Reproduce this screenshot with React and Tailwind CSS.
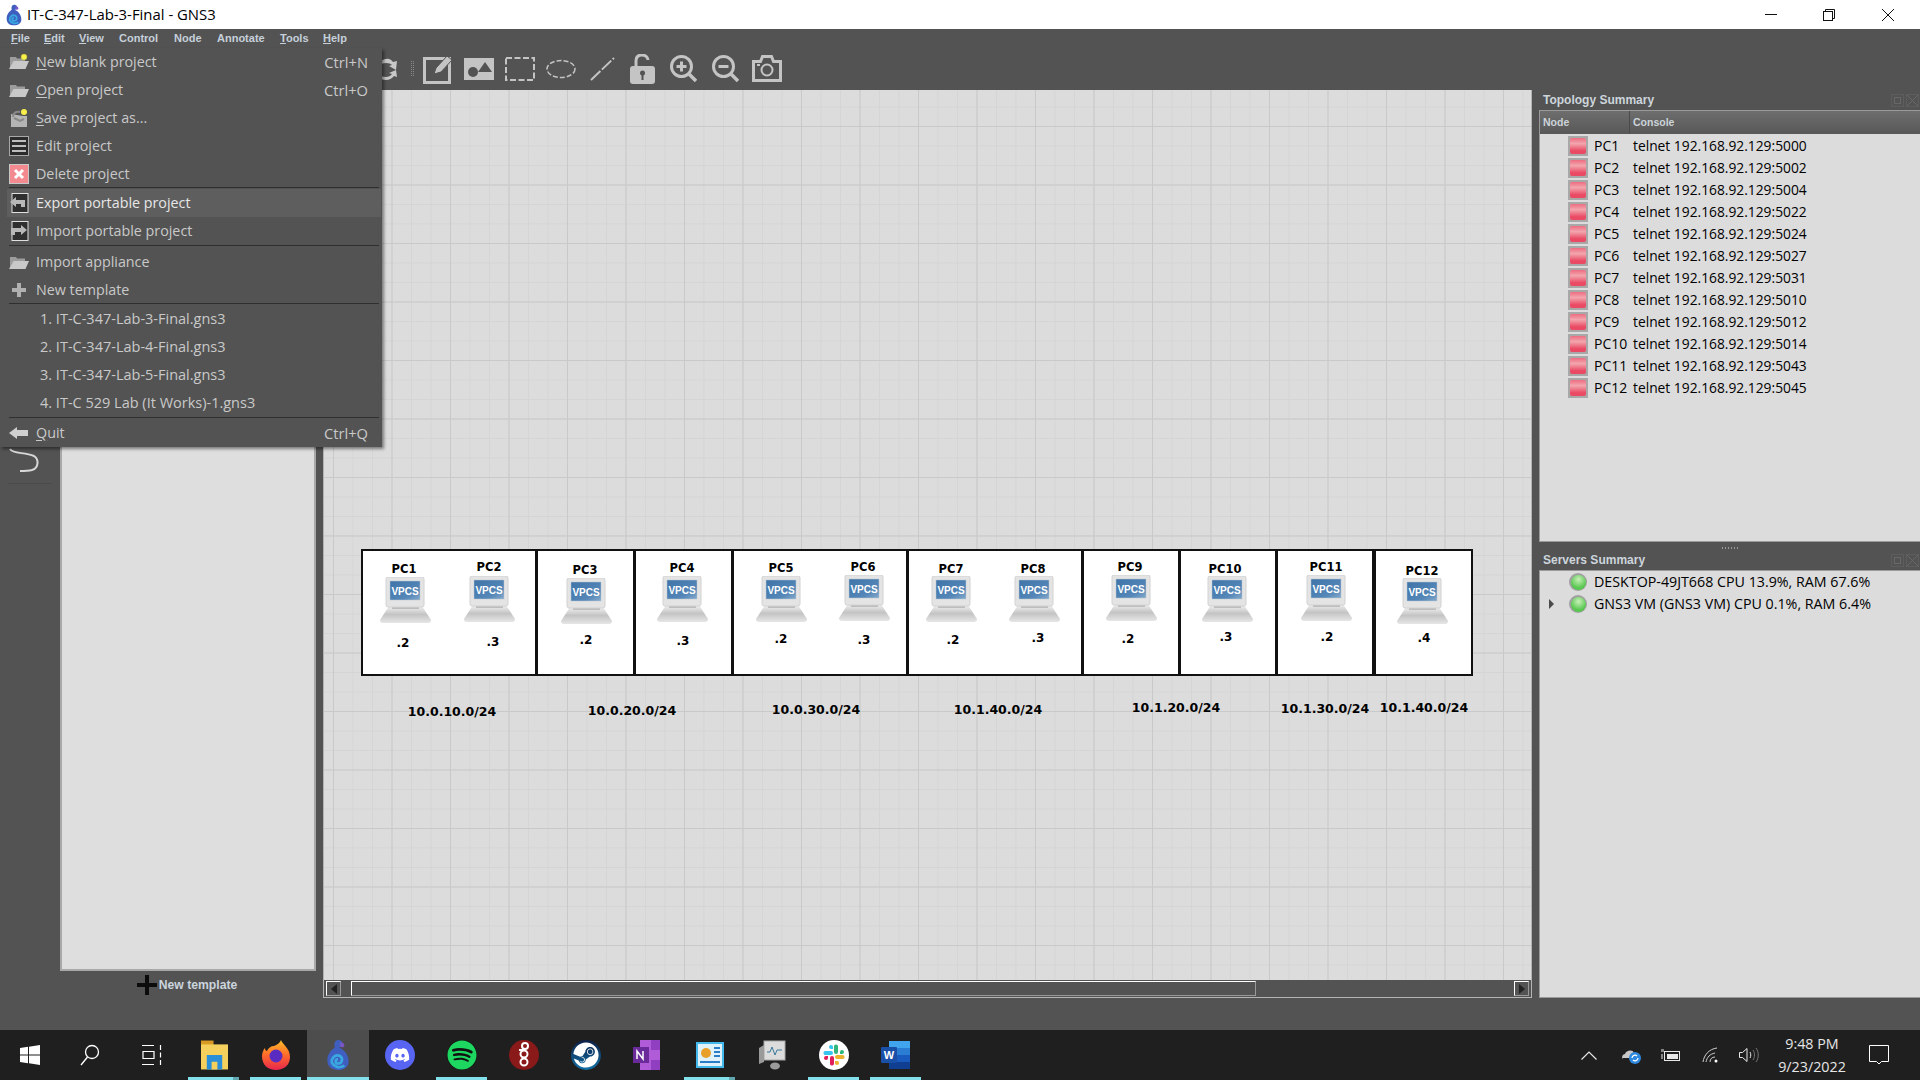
import React from 'react';
import { FaDiscord, FaSpotify, FaSteam } from 'react-icons/fa';

const ui = 'font-["Open_Sans","Noto_Sans",sans-serif]';
const bold = 'font-["Liberation_Sans",sans-serif] font-bold';

// canvas origin is at 323,90 of the window
const boxes = [
  { x: 38, w: 176 },
  { x: 213, w: 99 },
  { x: 311, w: 99 },
  { x: 409, w: 176 },
  { x: 584, w: 176 },
  { x: 759, w: 98 },
  { x: 856, w: 98 },
  { x: 953, w: 98 },
  { x: 1051, w: 99 },
];

const nodes = [
  { n: 'PC1', ix: 57, iy: 487, ly: 480, a: '.2', ax: 80, ay: 553, lx: 81 },
  { n: 'PC2', ix: 141, iy: 486, ly: 478, a: '.3', ax: 170, ay: 552, lx: 166 },
  { n: 'PC3', ix: 238, iy: 488, ly: 481, a: '.2', ax: 263, ay: 550, lx: 262 },
  { n: 'PC4', ix: 334, iy: 486, ly: 479, a: '.3', ax: 360, ay: 551, lx: 359 },
  { n: 'PC5', ix: 433, iy: 486, ly: 479, a: '.2', ax: 458, ay: 549, lx: 458 },
  { n: 'PC6', ix: 516, iy: 485, ly: 478, a: '.3', ax: 541, ay: 550, lx: 540 },
  { n: 'PC7', ix: 603, iy: 486, ly: 480, a: '.2', ax: 630, ay: 550, lx: 628 },
  { n: 'PC8', ix: 686, iy: 486, ly: 480, a: '.3', ax: 715, ay: 548, lx: 710 },
  { n: 'PC9', ix: 783, iy: 485, ly: 478, a: '.2', ax: 805, ay: 549, lx: 807 },
  { n: 'PC10', ix: 879, iy: 486, ly: 480, a: '.3', ax: 903, ay: 547, lx: 902 },
  { n: 'PC11', ix: 978, iy: 485, ly: 478, a: '.2', ax: 1004, ay: 547, lx: 1003 },
  { n: 'PC12', ix: 1074, iy: 488, ly: 482, a: '.4', ax: 1101, ay: 548, lx: 1099 },
];

const subnets = [
  { t: '10.0.10.0/24', x: 129, y: 622 },
  { t: '10.0.20.0/24', x: 309, y: 621 },
  { t: '10.0.30.0/24', x: 493, y: 620 },
  { t: '10.1.40.0/24', x: 675, y: 620 },
  { t: '10.1.20.0/24', x: 853, y: 618 },
  { t: '10.1.30.0/24', x: 1002, y: 619 },
  { t: '10.1.40.0/24', x: 1101, y: 618 },
];

const pcs = [
  ['PC1', 5000], ['PC2', 5002], ['PC3', 5004], ['PC4', 5022], ['PC5', 5024], ['PC6', 5027],
  ['PC7', 5031], ['PC8', 5010], ['PC9', 5012], ['PC10', 5014], ['PC11', 5043], ['PC12', 5045],
];

function VpcsIcon({ id }) {
  return (
    <svg width="51" height="46" viewBox="0 0 51 46">
      <defs>
        <linearGradient id={`kb${id}`} x1="0" y1="0" x2="0" y2="1">
          <stop offset="0" stopColor="#f2f2f2" />
          <stop offset="0.5" stopColor="#c4c4c4" />
          <stop offset="1" stopColor="#e6e6e6" />
        </linearGradient>
        <linearGradient id={`sc${id}`} x1="0" y1="0" x2="1" y2="1">
          <stop offset="0" stopColor="#3f74a8" />
          <stop offset="0.7" stopColor="#5587b8" />
          <stop offset="1" stopColor="#86aacb" />
        </linearGradient>
      </defs>
      <path d="M9 29h33l9 14q0 3-3 3H3q-3 0-3-3z" fill={`url(#kb${id})`} />
      <rect x="12" y="28" width="27" height="4" fill="#bdbdbd" />
      <rect x="6" y="0" width="38" height="30" rx="2" fill="#e4e4e4" stroke="#d2d2d2" />
      <rect x="10" y="4" width="30" height="19" fill={`url(#sc${id})`} stroke="#bcc8d2" strokeWidth="0.5" />
      <text x="25" y="18" textAnchor="middle" fill="#fff" fontFamily="Liberation Sans, sans-serif" fontWeight="700" fontSize="10">VPCS</text>
    </svg>
  );
}

function FolderIcon({ star }) {
  return (
    <svg width="20" height="18" viewBox="0 0 20 18">
      <path d="M1 4h6l1 1.5h8V8H5L1 15z" fill="#9c9c9c" />
      <path d="M4.500 8H20l-3.500 8H0z" fill="#c9c9c9" />
      {star && <circle cx="15" cy="4" r="3" fill="#f7f04a" stroke="#a8a43a" strokeWidth="0.5" />}
    </svg>
  );
}

function MenuIcon({ kind }) {
  if (kind === 'folder') return <FolderIcon />;
  if (kind === 'folderstar') return <FolderIcon star />;
  if (kind === 'save') {
    return (
      <svg width="20" height="20" viewBox="0 0 20 20">
        <path d="M2 6l12 2 4 0v11H2z" fill="#b4b4b4" />
        <path d="M4 9c0-4 3-6 7-5M5 10l6 3 4-2" stroke="#8a8a8a" strokeWidth="2" fill="none" />
        <circle cx="15" cy="4" r="3" fill="#f7f04a" />
      </svg>
    );
  }
  if (kind === 'edit') {
    return (
      <svg width="20" height="20" viewBox="0 0 20 20">
        <rect x="0.500" y="0.500" width="19" height="19" fill="#2b2b2b" stroke="#a8a8a8" />
        <rect x="3" y="4" width="14" height="2" fill="#bdbdbd" />
        <rect x="3" y="9" width="14" height="2" fill="#bdbdbd" />
        <rect x="3" y="14" width="14" height="2" fill="#bdbdbd" />
      </svg>
    );
  }
  if (kind === 'delete') {
    return (
      <svg width="20" height="20" viewBox="0 0 20 20">
        <rect x="0.500" y="0.500" width="19" height="19" fill="#f28a8f" stroke="#c8c8c8" />
        <path d="M6 6l8 8M14 6l-8 8" stroke="#fff" strokeWidth="3" />
      </svg>
    );
  }
  if (kind === 'export' || kind === 'import') {
    return (
      <svg width="20" height="20" viewBox="0 0 20 20">
        <rect x="3" y="0.500" width="16" height="19" fill="#2f2f2f" stroke="#e0e0e0" />
        {kind === 'export'
          ? <path d="M1 9l6-5v3h9v7h-4v-3H7v3z" fill="#b8b8b8" />
          : <path d="M18 9l-6-5v3H2v7h4v-3h6v3z" fill="#b8b8b8" />}
      </svg>
    );
  }
  if (kind === 'plus') {
    return (
      <svg width="20" height="20" viewBox="0 0 20 20">
        <path d="M8 3h4v5h5v4h-5v5H8v-5H3V8h5z" fill="#b0b0b0" />
      </svg>
    );
  }
  if (kind === 'quit') {
    return (
      <svg width="20" height="14" viewBox="0 0 20 14">
        <path d="M0 7l8-6v3h11v6H8v3z" fill="#cfcfcf" />
      </svg>
    );
  }
  return null;
}

function MenuItem({ icon, ul, label, shortcut, active, nudge }) {
  return (
    <div className={`h-[28px] flex items-center pr-[14px] ${active ? 'bg-[#5e5e5e] ml-[7px] pl-[2px] mr-[1px]' : 'pl-[9px]'}`}>
      <div className="w-[20px] flex justify-center shrink-0"><MenuIcon kind={icon} /></div>
      <div className={`ml-[7px] flex-1 text-[14.300px] leading-none ${nudge ? 'pt-px' : ''} ${active ? 'text-[#e6e6e6]' : 'text-[#c9c9c9]'}`}>
        {ul ? <><u className="underline-offset-2">{ul}</u>{label}</> : label}
      </div>
      {shortcut && <div className="text-[14.700px] leading-none text-[#c9c9c9]">{shortcut}</div>}
    </div>
  );
}

const Sep = ({ className }) => <div className={`h-px bg-[#2f2f2f] mx-[9px] mr-[3px] ${className}`} />;

function FileMenu() {
  return (
    <div className={`absolute left-0 top-[19px] w-[382px] h-[399px] bg-[#535353] z-20 shadow-[2px_2px_3px_rgba(0,0,0,0.45)] ${ui}`}>
      <MenuItem icon="folderstar" ul="N" label="ew blank project" shortcut="Ctrl+N" />
      <MenuItem icon="folder" ul="O" label="pen project" shortcut="Ctrl+O" />
      <MenuItem icon="save" ul="S" label="ave project as..." />
      <MenuItem icon="edit" label="Edit project" />
      <MenuItem icon="delete" label="Delete project" />
      <Sep className="-mt-px mb-px" />
      <MenuItem icon="export" label="Export portable project" active nudge />
      <MenuItem icon="import" label="Import portable project" nudge />
      <Sep className="mb-[2px]" />
      <MenuItem icon="folder" label="Import appliance" />
      <MenuItem icon="plus" label="New template" />
      <Sep className="-mt-px mb-[1px]" />
      {['1. IT-C-347-Lab-3-Final.gns3', '2. IT-C-347-Lab-4-Final.gns3', '3. IT-C-347-Lab-5-Final.gns3', '4. IT-C 529 Lab (It Works)-1.gns3'].map(t => (
        <div key={t} className="h-[28px] flex items-center pl-[40px] text-[14.500px] leading-none text-[#c9c9c9]">{t}</div>
      ))}
      <Sep className="mb-[1px]" />
      <MenuItem icon="quit" ul="Q" label="uit" shortcut="Ctrl+Q" />
    </div>
  );
}

const Grip = ({ className }) => (
  <div className={`grid grid-cols-2 gap-[1px] ${className}`}>
    {Array.from({ length: 16 }).map((_, i) => <div key={i} className="w-[1px] h-[1px] bg-[#8a8a8a]" />)}
  </div>
);

function DockButtons() {
  return (
    <div className="flex gap-[2px] opacity-60">
      <svg width="13" height="13" viewBox="0 0 13 13"><rect x="0.500" y="0.500" width="12" height="12" fill="none" stroke="#777" strokeDasharray="1 1" /><rect x="3.500" y="3.500" width="6" height="6" fill="none" stroke="#777" /></svg>
      <svg width="13" height="13" viewBox="0 0 13 13"><rect x="0.500" y="0.500" width="12" height="12" fill="none" stroke="#777" strokeDasharray="1 1" /><path d="M1 1l11 11M12 1L1 12" stroke="#777" /></svg>
    </div>
  );
}

function Toolbar() {
  const c = '#c4c4c4';
  return (
    <div className="h-[42px] flex items-center pl-[381px] pb-[1px] shrink-0">
      <svg width="18" height="30" viewBox="0 0 18 30" className="mr-[12px]">
        <path d="M0 7c6-4 10-2 12 1l4-1-1 9-7-4 3-1C9 9 5 8 0 10zM0 22c5 2 9 1 11-2l-3-1 7-3 1 7-3-1c-3 4-8 5-13 3z" fill="#c8c8c8" />
      </svg>
      <Grip className="mr-[9px]" />
      <svg width="30" height="30" viewBox="0 0 30 30" className="mr-[11px]">
        <rect x="1.500" y="4.500" width="25" height="24" fill="none" stroke={c} strokeWidth="3" />
        <path d="M11 20l2-6L24 2l5 4-11 12z" fill={c} stroke="#535353" strokeWidth="1" />
      </svg>
      <svg width="30" height="22" viewBox="0 0 30 22" className="mr-[11px]">
        <rect width="30" height="22" fill={c} />
        <circle cx="9" cy="14" r="5" fill="#535353" />
        <path d="M21 4l7 10H14z" fill="#535353" />
      </svg>
      <svg width="30" height="24" viewBox="0 0 30 24" className="mr-[11px]">
        <rect x="1" y="1" width="28" height="22" fill="none" stroke={c} strokeWidth="2" strokeDasharray="6 2.500" />
      </svg>
      <svg width="30" height="20" viewBox="0 0 30 20" className="mr-[14px]">
        <ellipse cx="15" cy="10" rx="14" ry="8.500" fill="none" stroke={c} strokeWidth="1.500" strokeDasharray="5 2" />
      </svg>
      <svg width="25" height="24" viewBox="0 0 25 24" className="mr-[15px]">
        <path d="M1 23L24 1" stroke={c} strokeWidth="2" strokeDasharray="13 2" />
      </svg>
      <svg width="25" height="30" viewBox="0 0 25 30" className="mr-[15px]">
        <path d="M6 13V7c0-5 3-6 6-6s6 2 6 5" fill="none" stroke={c} strokeWidth="3" />
        <rect x="0" y="12" width="25" height="18" rx="3" fill={c} />
        <circle cx="12.500" cy="19" r="2.500" fill="#535353" />
        <rect x="11.500" y="20" width="2" height="6" fill="#535353" />
      </svg>
      <svg width="27" height="28" viewBox="0 0 27 28" className="mr-[15px]">
        <circle cx="11.500" cy="11.500" r="10" fill="none" stroke={c} strokeWidth="3" />
        <path d="M18 18l8 8" stroke={c} strokeWidth="3.500" />
        <path d="M6.500 11.500h10M11.500 6.500v10" stroke={c} strokeWidth="3" />
      </svg>
      <svg width="27" height="28" viewBox="0 0 27 28" className="mr-[13px]">
        <circle cx="11.500" cy="11.500" r="10" fill="none" stroke={c} strokeWidth="3" />
        <path d="M18 18l8 8" stroke={c} strokeWidth="3.500" />
        <path d="M6.500 11.500h10" stroke={c} strokeWidth="3" />
      </svg>
      <svg width="30" height="27" viewBox="0 0 30 27">
        <path d="M1.500 6.500h7l2-5h9l2 5h7v19h-27z" fill="none" stroke={c} strokeWidth="3" />
        <circle cx="15" cy="15" r="5.500" fill="none" stroke={c} strokeWidth="2" />
        <rect x="5" y="9" width="3" height="2" fill={c} />
      </svg>
    </div>
  );
}

function Canvas() {
  return (
    <div className="relative flex-1 bg-[#dcdcdc] bg-[linear-gradient(to_right,#c9c9c9_1px,transparent_1px),linear-gradient(to_bottom,#c9c9c9_1px,transparent_1px),linear-gradient(to_right,#d5d5d5_1px,transparent_1px),linear-gradient(to_bottom,#d5d5d5_1px,transparent_1px)] bg-[size:58.5px_58.5px,58.5px_58.5px,19.5px_19.5px,19.5px_19.5px] bg-[position:9px_36px,9px_36px,9px_36px,9px_36px] overflow-hidden">
      {/* scene items keep their own coordinates */}
      <div className="absolute -left-px top-0">
        {boxes.map(b => (
          <div key={b.x} className="absolute top-[459px] h-[127px] bg-white border-2 border-[#111]" style={{ left: b.x, width: b.w }} />
        ))}
        {nodes.map(p => (
          <React.Fragment key={p.n}>
            <div className={`absolute -translate-x-1/2 -translate-y-1/2 text-[11.500px] leading-none text-black font-["DejaVu_Sans",sans-serif] font-bold`} style={{ left: p.lx, top: p.ly }}>{p.n}</div>
            <div className="absolute" style={{ left: p.ix, top: p.iy }}><VpcsIcon id={p.n} /></div>
            <div className={`absolute -translate-x-1/2 -translate-y-1/2 text-[12px] leading-none text-black font-["DejaVu_Sans",sans-serif] font-bold`} style={{ left: p.ax, top: p.ay }}>{p.a}</div>
          </React.Fragment>
        ))}
        {subnets.map((s, i) => (
          <div key={i} className={`absolute -translate-x-1/2 -translate-y-1/2 text-[12.500px] leading-none whitespace-nowrap text-black font-["DejaVu_Sans",sans-serif] font-bold`} style={{ left: s.x, top: s.y }}>{s.t}</div>
        ))}
      </div>
    </div>
  );
}

function Scrollbar() {
  return (
    <div className="h-[18px] flex items-start pt-[1px] pl-[2px] pr-[2px] bg-[#535353] border-b border-[#b4b4b4] shrink-0">
      <div className="w-[15px] h-[15px] flex items-center justify-center border-t border-l border-white border-r border-b border-r-[#999] border-b-[#999]">
        <div className="w-0 h-0 border-y-[5px] border-y-transparent border-r-[6px] border-r-[#222]" />
      </div>
      <div className="ml-[10px] w-[905px] h-[15px] border-t border-l border-white border-r border-b border-r-[#999] border-b-[#999]" />
      <div className="flex-1" />
      <div className="w-[15px] h-[15px] flex items-center justify-center border-t border-l border-white border-r border-b border-r-[#999] border-b-[#999]">
        <div className="w-0 h-0 border-y-[5px] border-y-transparent border-l-[6px] border-l-[#222]" />
      </div>
    </div>
  );
}

function TopologyDock() {
  return (
    <div className="h-[452px] flex flex-col shrink-0">
      <div className={`h-[20px] flex items-center justify-between pl-[4px] pr-[1px] text-[12px] text-[#cdd5dc] ${bold}`}>
        <span>Topology Summary</span>
        <DockButtons />
      </div>
      <div className="flex-1 bg-[#dcdcdc] border border-[#9a9a9a] border-r-0">
        <div className={`h-[23px] flex items-center bg-[linear-gradient(#6e6e6e,#585858)] text-[10.500px] text-[#ccd4da] ${bold}`}>
          <div className="w-[90px] pl-[3px] border-r border-[#4a4a4a] h-full flex items-center">Node</div>
          <div className="pl-[3px]">Console</div>
        </div>
        <div className={`${ui} pt-px text-[14px] leading-none text-black`}>
          {pcs.map(([name, port]) => (
            <div key={name} className="h-[22px] flex items-center">
              <div className="ml-[28px] w-[20px] h-[20px] bg-[#a8a8a8] flex items-center justify-center shrink-0">
                <div className="w-[16px] h-[16px] rounded-[2px] bg-[linear-gradient(#ee6c80,#f2a6ae_35%,#ea4a64_80%)]" />
              </div>
              <div className="w-[39px] ml-[6px] shrink-0">{name}</div>
              <div className="text-[13.800px]">telnet 192.168.92.129:{port}</div>
            </div>
          ))}
        </div>
      </div>
    </div>
  );
}

function ServersDock() {
  const Led = () => (
    <div className="w-[18px] h-[18px] rounded-full bg-[#a0a0a0] flex items-center justify-center shrink-0">
      <div className="w-[15px] h-[15px] rounded-full bg-[radial-gradient(circle_at_50%_30%,#c8f0b8,#58c850_65%)]" />
    </div>
  );
  return (
    <div className="flex-1 flex flex-col">
      <div className="h-[7px] flex justify-center items-end">
        <div className="w-[16px] h-[2px] bg-[repeating-linear-gradient(to_right,#999_0_1px,transparent_1px_3px)]" />
      </div>
      <div className={`h-[21px] flex items-center justify-between pl-[4px] pr-[1px] pt-px text-[12px] text-[#cdd5dc] ${bold}`}>
        <span>Servers Summary</span>
        <DockButtons />
      </div>
      <div className={`flex-1 bg-[#dcdcdc] border-t border-b border-l border-[#9a9a9a] ${ui} text-[14.250px] leading-none text-black`}>
        <div className="h-[22px] flex items-center pl-[29px]"><Led /><span className="ml-[7px]">DESKTOP-49JT668 CPU 13.9%, RAM 67.6%</span></div>
        <div className="h-[22px] flex items-center pl-[9px]">
          <div className="w-0 h-0 border-y-[5px] border-y-transparent border-l-[5px] border-l-[#4a4a4a] mr-[15px]" />
          <Led /><span className="ml-[7px]">GNS3 VM (GNS3 VM) CPU 0.1%, RAM 6.4%</span>
        </div>
      </div>
    </div>
  );
}

function GnsIcon({ size }) {
  return (
    <svg width={size} height={size} viewBox="0 0 30 30">
      <path d="M15 1c4 0 5 3 4 6l-3 1c5 2 9 7 9 13 0 5-4 8-10 8S5 26 5 20c0-6 4-10 7-12-1-3 0-7 3-7z" fill="#3f5fc0" />
      <path d="M17 3c2 0 4 1 4 3s-3 2-4 1z" fill="#7a55c8" />
      <path d="M9 22c0-5 4-8 8-6 3 2 2 7-2 7-3 0-3-4 0-4M9 22c2 4 7 6 12 3" fill="none" stroke="#39a8e0" strokeWidth="2.500" />
    </svg>
  );
}

const apps = [
  {
    line: true, extra: true, icon: (
      <svg width="27" height="30" viewBox="0 0 28 30">
        <rect x="0" y="0" width="13" height="5" fill="#d89a22" />
        <rect x="0" y="4" width="28" height="26" fill="#f5d05c" />
        <rect x="6" y="15" width="16" height="15" fill="#2a8fd8" />
        <rect x="11" y="22" width="6" height="8" fill="#f5d05c" />
      </svg>
    ),
  },
  {
    line: true, icon: (
      <svg width="30" height="30" viewBox="0 0 30 30">
        <defs>
          <linearGradient id="ff" x1="0" y1="0" x2="0" y2="1"><stop offset="0" stopColor="#ffc02a" /><stop offset="0.5" stopColor="#ff6a2a" /><stop offset="1" stopColor="#e8264e" /></linearGradient>
        </defs>
        <path d="M20 0c1 4 9 8 9 17 0 8-6 13-14 13S1 25 1 16c0-4 2-7 3-8 0 2 1 3 2 3 1-3 4-5 7-5 3-1 6-3 7-6z" fill="url(#ff)" />
        <circle cx="15" cy="16" r="6.500" fill="#5a2bc0" />
      </svg>
    ),
  },
  { line: true, active: true, icon: <GnsIcon size={32} /> },
  {
    icon: <div className="w-[30px] h-[30px] rounded-full bg-[#5865f2] flex items-center justify-center"><FaDiscord className="text-white" size={20} /></div>,
  },
  {
    line: true, icon: <div className="w-[30px] h-[30px] rounded-full bg-[#111] flex items-center justify-center"><FaSpotify className="text-[#1ed760]" size={30} /></div>,
  },
  {
    icon: (
      <svg width="30" height="30" viewBox="0 0 30 30">
        <circle cx="15" cy="15" r="15" fill="#8a1a1a" />
        <circle cx="16" cy="6" r="3" fill="none" stroke="#fff" strokeWidth="2" />
        <circle cx="15" cy="14" r="3.500" fill="none" stroke="#fff" strokeWidth="2" />
        <circle cx="15" cy="22" r="3.500" fill="none" stroke="#fff" strokeWidth="2" />
        <path d="M10 10h5" stroke="#fff" strokeWidth="2" />
      </svg>
    ),
  },
  {
    icon: <div className="w-[30px] h-[30px] rounded-full bg-[linear-gradient(#0f1f46,#1070a8)] flex items-center justify-center"><FaSteam className="text-white" size={26} /></div>,
  },
  {
    icon: (
      <svg width="30" height="30" viewBox="0 0 30 30">
        <path d="M7 0h20v30H7z" fill="#b05cd8" />
        <path d="M18 0h9v10h-9zM18 20h9v10h-9z" fill="#8f3fbf" />
        <rect x="0" y="7" width="16" height="16" fill="#6a2a9a" />
        <path d="M4 19v-8l6 8v-8" stroke="#fff" strokeWidth="1.500" fill="none" />
      </svg>
    ),
  },
  {
    line: true, extra: true, icon: (
      <svg width="28" height="26" viewBox="0 0 28 26">
        <rect width="28" height="26" fill="#42b8ec" />
        <rect x="2" y="2" width="24" height="22" fill="#dff2fb" />
        <circle cx="10" cy="11" r="5" fill="#e8a02a" />
        <path d="M18 6h6M18 10h6M18 14h6M4 20h20" stroke="#2a7ec8" strokeWidth="2" />
      </svg>
    ),
  },
  {
    icon: (
      <svg width="28" height="30" viewBox="0 0 28 30">
        <rect x="6" y="1" width="21" height="19" fill="#dcdcdc" stroke="#a8a8a8" />
        <path d="M9 12h3l2-5 3 8 2-5h5" stroke="#3a7a9a" fill="none" />
        <path d="M1 8l5-3v17l-5 2z" fill="#9a9a9a" />
        <ellipse cx="17" cy="26" rx="5" ry="3.500" fill="#9a9a9a" />
      </svg>
    ),
  },
  {
    line: true, icon: (
      <div className="w-[30px] h-[30px] rounded-full bg-white flex items-center justify-center">
        <svg width="22" height="22" viewBox="0 0 22 22">
          <path d="M8 1a2 2 0 0 1 2 2v2H8a2 2 0 0 1 0-4zM2 7h6a2 2 0 0 1 0 4H3a2 2 0 0 1-1-4z" fill="#36c5f0" />
          <path d="M21 8a2 2 0 0 1-2 2h-2V8a2 2 0 0 1 4 0zM15 2v6a2 2 0 0 1-4 0V3a2 2 0 0 1 4-1z" fill="#2eb67d" />
          <path d="M14 21a2 2 0 0 1-2-2v-2h2a2 2 0 0 1 0 4zM20 15h-6a2 2 0 0 1 0-4h5a2 2 0 0 1 1 4z" fill="#ecb22e" />
          <path d="M1 14a2 2 0 0 1 2-2h2v2a2 2 0 0 1-4 0zM7 20v-6a2 2 0 0 1 4 0v5a2 2 0 0 1-4 1z" fill="#e01e5a" />
        </svg>
      </div>
    ),
  },
  {
    line: true, icon: (
      <svg width="30" height="30" viewBox="0 0 30 30">
        <rect x="8" y="1" width="21" height="28" rx="1" fill="#2b7cd3" />
        <rect x="8" y="1" width="21" height="7" fill="#41a5ee" />
        <rect x="8" y="15" width="21" height="7" fill="#185abd" />
        <rect x="8" y="22" width="21" height="7" fill="#103f91" />
        <rect x="0" y="7" width="16" height="16" rx="1" fill="#1a4fa8" />
        <text x="8" y="19" textAnchor="middle" fill="#fff" fontFamily="Liberation Sans, sans-serif" fontWeight="700" fontSize="11">W</text>
      </svg>
    ),
  },
];

function Taskbar() {
  return (
    <div className="h-[50px] bg-[#1f1f1f] flex items-center shrink-0 relative">
      <div className="w-[60px] h-full flex items-center justify-center">
        <svg width="20" height="20" viewBox="0 0 20 20" fill="#fff">
          <path d="M0 3l8-1.200v7.700H0zM9 1.700L20 0v9.500H9zM0 10.500h8v7.700L0 17zM9 10.500h11V20L9 18.300z" />
        </svg>
      </div>
      <div className="w-[60px] h-full flex items-center justify-center">
        <svg width="20" height="22" viewBox="0 0 20 22" fill="none" stroke="#fff" strokeWidth="1.300">
          <circle cx="12" cy="8" r="6.500" /><path d="M7.500 13L1 21" />
        </svg>
      </div>
      <div className="w-[63px] h-full flex items-center justify-center">
        <svg width="20" height="20" viewBox="0 0 20 20" fill="none" stroke="#fff" strokeWidth="1.200">
          <path d="M0 .5h12M0 19.500h12M1 6.500h11v7H1zM18.500 0v5M18.500 7.500v5M18.500 15v5" />
        </svg>
      </div>
      {apps.map((a, i) => (
        <div key={i} className={`w-[62px] h-full relative flex items-center justify-center ${a.active ? 'bg-[#4d4d4d]' : ''}`}>
          {a.icon}
          {a.line && <div className={`absolute bottom-0 h-[3px] bg-[#82e0ea] ${a.active ? 'left-0 right-0' : 'left-[5px] right-[6px]'}`} />}
          {a.extra && <div className="absolute bottom-0 right-[6px] w-[6px] h-[3px] bg-[#5fa8b0]" />}
        </div>
      ))}
      <div className="flex-1" />
      <div className="flex items-center h-full">
        <svg width="16" height="9" viewBox="0 0 16 9" fill="none" stroke="#e8e8e8" strokeWidth="1.200" className="mr-[24px]"><path d="M.5 8.500L8 1l7.500 7.500" /></svg>
        <svg width="20" height="17" viewBox="0 0 20 17" className="mr-[20px]">
          <path d="M2 12c-2-2 0-5 2-5 1-4 8-5 9-1 2 0 4 2 3 5H2z" fill="#c8c8c8" />
          <circle cx="14" cy="11" r="6" fill="#2d88e0" />
          <path d="M11 11a3 3 0 0 1 5-2M17 11a3 3 0 0 1-5 2" stroke="#fff" strokeWidth="1.300" fill="none" />
        </svg>
        <svg width="20" height="13" viewBox="0 0 20 13" fill="none" stroke="#e8e8e8" className="mr-[21px]">
          <rect x="3.500" y="2.500" width="15" height="9" /><rect x="6" y="5" width="11" height="5" fill="#e8e8e8" stroke="none" /><path d="M2 0v3M0 0v3M1 5v5" />
        </svg>
        <svg width="16" height="16" viewBox="0 0 16 16" fill="none" stroke="#d0d0d0" className="mr-[21px]">
          <path d="M1 15C2 8 7 2 15 1M4 15c1-5 4-8 9-9M8 15c0-3 2-5 5-5" /><circle cx="14" cy="14" r="1.500" fill="#fff" stroke="none" />
        </svg>
        <svg width="20" height="16" viewBox="0 0 20 16" fill="none" className="mr-[16px]">
          <path d="M.5 5.500h3L8 1.500v13l-4.500-4h-3z" stroke="#e8e8e8" /><path d="M11 5c1 2 1 4 0 6" stroke="#e8e8e8" /><path d="M14 3c2 3 2 7 0 10M17 1c3 4 3 10 0 14" stroke="#777" />
        </svg>
        <div className={`w-[74px] mr-[20px] text-center text-[14.300px] leading-[23px] text-[#e6e6e6] whitespace-nowrap ${ui}`}>
          <div>9:48 PM</div>
          <div>9/23/2022</div>
        </div>
        <svg width="20" height="20" viewBox="0 0 20 20" fill="none" stroke="#fff" className="mr-[31px]">
          <path d="M.5 .5h19v16h-7l-2.500 2.500-2.500-2.500h-7z" />
        </svg>
      </div>
    </div>
  );
}

export default function App() {
  return (
    <div className="w-[1920px] h-[1080px] flex flex-col bg-[#535353] overflow-hidden">
      {/* title bar */}
      <div className="h-[29px] bg-white flex items-center shrink-0">
        <div className="ml-[3px] mr-[2px]"><GnsIcon size={22} /></div>
        <div className={`text-[14.900px] leading-none text-black ${ui}`}>IT-C-347-Lab-3-Final - GNS3</div>
        <div className="flex-1" />
        <svg width="12" height="1" className="mr-[46px]"><rect width="12" height="1" fill="#111" /></svg>
        <svg width="12" height="12" viewBox="0 0 12 12" fill="none" stroke="#111" className="mr-[47px]"><rect x=".5" y="2.500" width="9" height="9" /><path d="M2.500 2.500v-2h9v9h-2" /></svg>
        <svg width="12" height="12" viewBox="0 0 12 12" fill="none" stroke="#111" className="mr-[26px]"><path d="M0 0l12 12M12 0L0 12" /></svg>
      </div>

      <div className="relative flex-1 flex flex-col">
        {/* menu bar */}
        <div className={`h-[19px] flex items-center pl-[11px] text-[11px] leading-none text-[#c6d0da] shrink-0 ${bold}`}>
          <span className="w-[33px]"><u>F</u>ile</span>
          <span className="w-[35px]"><u>E</u>dit</span>
          <span className="w-[40px]"><u>V</u>iew</span>
          <span className="w-[55px]">Control</span>
          <span className="w-[43px]">Node</span>
          <span className="w-[63px]">Annotate</span>
          <span className="w-[43px]"><u>T</u>ools</span>
          <span><u>H</u>elp</span>
        </div>
        <FileMenu />
        <Toolbar />

        <div className="flex-1 flex min-h-0">
          {/* device list column */}
          <div className="w-[60px] flex flex-col shrink-0 relative">
            <svg width="34" height="26" viewBox="0 0 34 26" className="absolute left-[9px] top-[357px]">
              <path d="M1 2c3 5 14 3 24 7 5 3 5 12-2 14-4 1-9 1-12 1" fill="none" stroke="#d8d8d8" strokeWidth="2" />
            </svg>
            <div className="absolute left-[8px] right-[8px] top-[393px] h-px bg-[#4a4a4a]" />
          </div>
          <div className="w-[256px] flex flex-col shrink-0">
            <div className="h-[881px] bg-[#dedede] border-2 border-t-0 border-[#a8a8a8] border-x-[#a8a8a8] shrink-0" />
            <div className={`h-[27px] flex items-center justify-center pt-px text-[12.200px] text-[#cbd5de] ${bold}`}>
              <svg width="20" height="20" viewBox="0 0 20 20" className="mr-[2px] -ml-[2px]"><path d="M8 0h4v8h8v4h-8v8H8v-8H0V8h8z" fill="#0c0c0c" /></svg>
              New template
            </div>
          </div>
          {/* splitter */}
          <div className="w-[7px] shrink-0 flex items-center justify-center pb-[400px]"><Grip className="opacity-70" /></div>

          <div className="w-[1209px] shrink-0 flex flex-col h-[908px] border-x border-[#b4b4b4]">
            <Canvas />
            <Scrollbar />
          </div>

          <div className="w-[7px] shrink-0" />
          <div className="flex-1 h-[908px] flex flex-col">
            <TopologyDock />
            <ServersDock />
          </div>
        </div>
      </div>

      <Taskbar />
    </div>
  );
}
